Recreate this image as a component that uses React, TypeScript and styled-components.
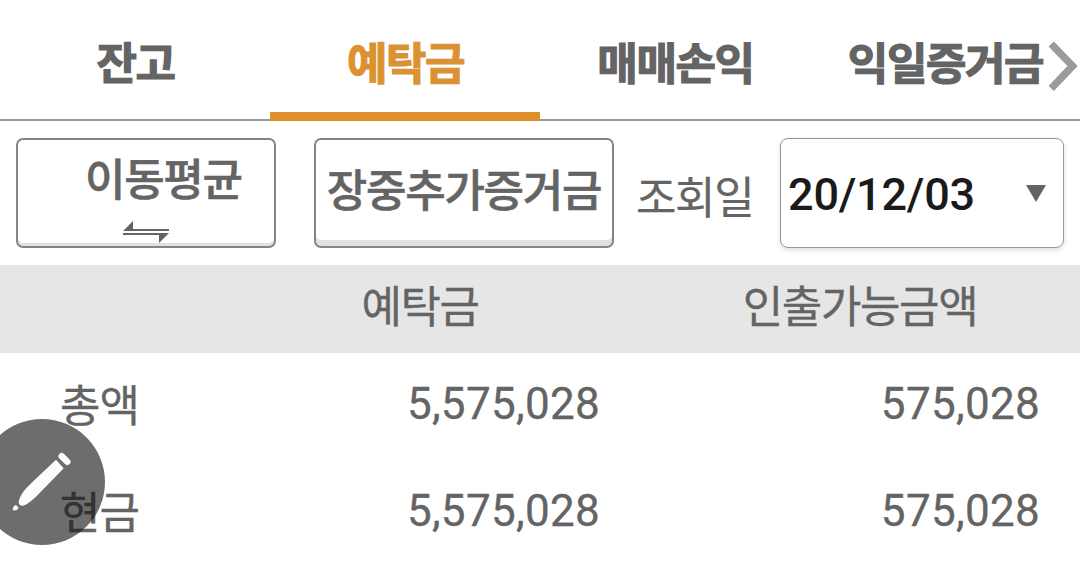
import React from "react";
import styled, { createGlobalStyle } from "styled-components";

const GlobalStyle = createGlobalStyle`
  * {
    box-sizing: border-box;
  }

  body {
    margin: 0;
    background: #fff;
    color: #646464;
    font-family: Roboto, "Noto Sans CJK KR", sans-serif;
    overflow: hidden;
  }
`

const Screen = styled.main`
  position: relative;
  width: 1080px;
  height: 577px;
  overflow: hidden;
`

const Tabs = styled.nav`
  position: relative;
  display: grid;
  grid-template-columns: repeat(4, 270px);
  height: 121px;
  border-bottom: 2px solid #999;
`

const Tab = styled.div<{ $active?: boolean }>`
  height: 121px;
  padding: 34px 0 0 1px;
  text-align: center;
  font-size: 44px;
  line-height: 62px;
  font-weight: 700;
  letter-spacing: -1.4px;
  white-space: nowrap;
  color: ${({ $active }) => $active ? '#db9233' : '#646464'};
  -webkit-text-stroke: 1.2px currentColor;
  border-bottom: ${({ $active }) => $active ? '9px solid #de902f' : 'none'};
`

const NextArrow = styled.svg`
  position: absolute;
  right: 0;
  top: 38px;
`

const Toolbar = styled.section`
  display: flex;
  height: 144px;
  padding: 17px 16px;
`

const Button = styled.button<{ $width: number }>`
  width: ${({ $width }) => $width}px;
  height: 110px;
  padding: 0 0 2px;
  border: 2px solid #858585;
  border-radius: 7px;
  background: #fff;
  box-shadow: inset 0 -6px 0 #e2e2e2;
  color: #646464;
  font-family: inherit;
  font-size: 44px;
  font-weight: 500;
  line-height: 62px;
  letter-spacing: -1.3px;
  white-space: nowrap;
  -webkit-text-stroke: 0.6px currentColor;
`

const AverageButton = styled(Button)`
  display: flex;
  flex-direction: column;
  align-items: flex-start;
  padding: 10px 0 0 67px;
  box-shadow: inset 0 -3px 0 #e2e2e2;

  svg {
    margin: 9px 0 0 38px;
  }
`

const MarginButton = styled(Button)`
  margin-left: 38px;
`

const DateLabel = styled.span`
  width: 166px;
  padding: 30px 0 0 22px;
  font-size: 44px;
  line-height: 62px;
  letter-spacing: -1.4px;
  -webkit-text-stroke: 0.2px currentColor;
`

const DateSelect = styled.div`
  display: flex;
  align-items: center;
  justify-content: space-between;
  width: 284px;
  height: 110px;
  padding: 2px 16px 0 7px;
  border: 1px solid #969696;
  border-radius: 8px;
  box-shadow: 0 2px 5px #ddd;
  color: #1a1a1a;
  font-size: 45px;
  font-weight: 500;
  letter-spacing: -0.2px;
`

const TableHead = styled.div`
  display: grid;
  grid-template-columns: 240px 360px 480px;
  height: 88px;
  background: #e6e6e6;
  font-size: 44px;
  line-height: 86px;
  letter-spacing: -1.4px;
  text-align: center;
  -webkit-text-stroke: 0.3px currentColor;
`

const AvailableTitle = styled.span`
  padding-left: 40px;
`

const TableRow = styled.div`
  display: grid;
  grid-template-columns: 240px 360px 440px;
  height: 107px;
  font-size: 44px;
  line-height: 108px;
  -webkit-text-stroke: 0.3px currentColor;
`

const RowName = styled.span`
  padding-left: 60px;
  letter-spacing: -1px;
`

const Amount = styled.span`
  text-align: right;
  letter-spacing: 0.3px;
  line-height: 102px;
`

const EditButton = styled.div`
  position: absolute;
  left: -21px;
  top: 419px;
  width: 126px;
  height: 126px;
  border-radius: 50%;
  background: rgba(20, 20, 20, 0.62);
`

const ExchangeIcon = () => <svg width="46" height="22" viewBox="0 0 46 22" fill="#646464">
    <path d="M0 10L10 0V8H46V10Z"/>
    <path d="M0 12H46L36 22V14H0Z"/>
</svg>

const PencilIcon = () => <svg width="126" height="126" viewBox="0 0 126 126" fill="#fcfcfc">
    <path d="M77 40.7L84.7 49.3L57.7 77Q51 83.5 46 86Q42.5 87.5 41 86Q39 84.5 40 81Q41 77.5 44.3 72.7Q47.5 68.5 52.7 63.7Z"/>
    <path d="M82.7 37.2L88.3 42.8" stroke="#fcfcfc" strokeWidth="6.5" strokeLinecap="round"/>
    <path d="M37 86L39.7 88.7Q39 90.2 37.7 91L34.8 91.6Q33.6 91.6 33.7 90.4L34.3 88Q35.3 86.6 37 86Z"/>
</svg>

const rows = [
    { name: '총액', deposit: '5,575,028', available: '575,028' },
    { name: '현금', deposit: '5,575,028', available: '575,028' },
]

const App: React.FC = () => {
    return (
        <>
            <GlobalStyle />
            <Screen>
                <Tabs>
                    <Tab>잔고</Tab>
                    <Tab $active>예탁금</Tab>
                    <Tab>매매손익</Tab>
                    <Tab>익일증거금</Tab>
                    <NextArrow width="34" height="56" viewBox="0 0 34 56">
                        <path d="M5.2 6L26.5 28L5.2 50.5" fill="none" stroke="#9b9b9b" strokeWidth="7.5"/>
                    </NextArrow>
                </Tabs>
                <Toolbar>
                    <AverageButton $width={260}>
                        이동평균
                        <ExchangeIcon />
                    </AverageButton>
                    <MarginButton $width={300}>장중추가증거금</MarginButton>
                    <DateLabel>조회일</DateLabel>
                    <DateSelect>
                        <span>20/12/03</span>
                        <svg width="22" height="18" viewBox="0 0 22 18"><path d="M1 0H21L11 17Z" fill="#646464"/></svg>
                    </DateSelect>
                </Toolbar>
                <TableHead>
                    <span />
                    <span>예탁금</span>
                    <AvailableTitle>인출가능금액</AvailableTitle>
                </TableHead>
                {rows.map((row) => (
                    <TableRow key={row.name}>
                        <RowName>{row.name}</RowName>
                        <Amount>{row.deposit}</Amount>
                        <Amount>{row.available}</Amount>
                    </TableRow>
                ))}
                <EditButton><PencilIcon /></EditButton>
            </Screen>
        </>
    )
}

export default App;
